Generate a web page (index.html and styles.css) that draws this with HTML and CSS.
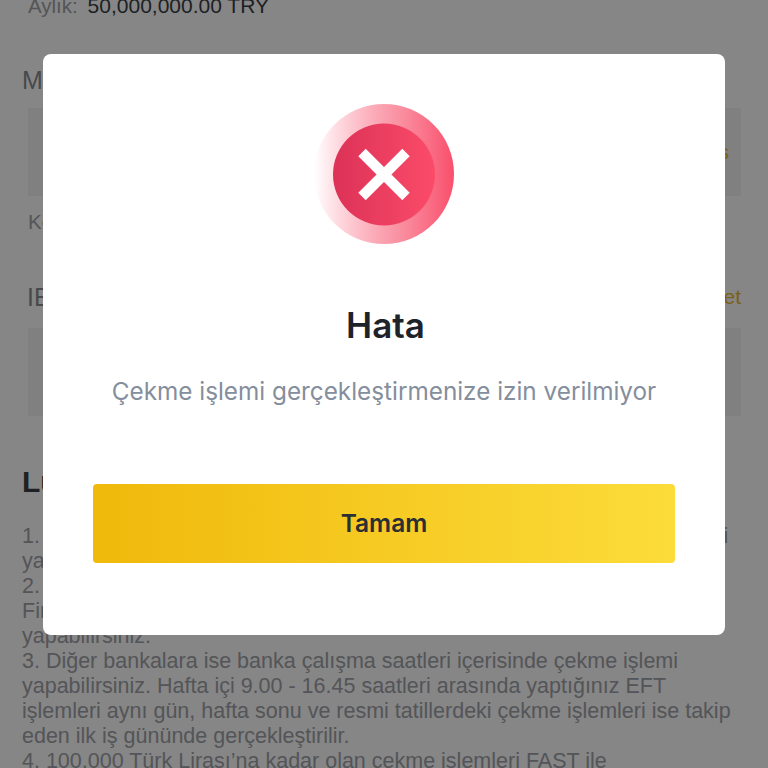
FILE: index.html

```html
<!DOCTYPE html>
<html lang="tr">

<head>
    <meta charset="utf-8">
    <meta name="viewport" content="width=device-width, initial-scale=1.0">
    <title>Çekme</title>
    <link rel="stylesheet" href="styles.css">
</head>

<body>
    <main class="sayfa">
        <p class="limit"><span class="limit_etiket">Aylık:</span> 50,000,000.00 TRY</p>

        <h2 class="baslik">Miktar</h2>
        <div class="kutu">
            <span class="kutu_link">Maks</span>
        </div>
        <p class="kullanilabilir">Kesinti</p>

        <div class="baslik_satir">
            <h2 class="baslik">IBAN</h2>
            <span class="kutu_link">Yönet</span>
        </div>
        <div class="kutu"></div>

        <h1 class="lutfen">Lütfen dikkat</h1>
        <p class="metin">
            1. Aşağıdaki bankaların hesaplarına, haftanın her günü, 7/24 çekme işlemi<br>
            yapabilirsiniz.<br>
            2. Anlaşmalı bankalara ise her gün çekme işlemi yapabilirsiniz.<br>
            Fin bankalar için de aynı saatler içinde çekme işlemi<br>
            yapabilirsiniz.<br>
            3. Diğer bankalara ise banka çalışma saatleri içerisinde çekme işlemi<br>
            yapabilirsiniz. Hafta içi 9.00 - 16.45 saatleri arasında yaptığınız EFT<br>
            işlemleri aynı gün, hafta sonu ve resmi tatillerdeki çekme işlemleri ise takip<br>
            eden ilk iş gününde gerçekleştirilir.<br>
            4. 100.000 Türk Lirası’na kadar olan çekme işlemleri FAST ile
        </p>
    </main>

    <section class="perde">
        <article class="popup">
            <svg class="popup_ikon" width="140" height="140" viewBox="0 0 140 140">
                <defs>
                    <linearGradient id="dis_halka">
                        <stop offset="0" stop-color="#fb5470" stop-opacity="0"></stop>
                        <stop offset="0.5" stop-color="#f86f85" stop-opacity="0.66"></stop>
                        <stop offset="1" stop-color="#f94f6c"></stop>
                    </linearGradient>
                    <linearGradient id="ic_daire">
                        <stop offset="0" stop-color="#dc3257"></stop>
                        <stop offset="1" stop-color="#fb4b69"></stop>
                    </linearGradient>
                </defs>
                <circle cx="70" cy="70" r="70" fill="url(#dis_halka)"></circle>
                <circle cx="70" cy="70.5" r="51" fill="url(#ic_daire)"></circle>
                <path d="M48 48.5 92 92.5M92 48.5 48 92.5" stroke="#fff" stroke-width="10.5" fill="none"></path>
            </svg>
            <h2 class="popup_titel">Hata</h2>
            <p class="popup_tekst">Çekme işlemi gerçekleştirmenize izin verilmiyor</p>
            <button class="popup_knap">Tamam</button>
        </article>
    </section>
</body>

</html>
```

FILE: styles.css

```css
body {
    margin: 0;
    height: 768px;
    overflow: hidden;
    background-color: #fff;
    font-family: "Liberation Sans", Arial, sans-serif;
}

.sayfa {
    padding: 0 27px 0 22px;
    margin-top: -7px;
}

.limit {
    margin: 0 0 0 6px;
    font-size: 21px;
    line-height: 26px;
    color: #3a3e46;
}

.limit_etiket {
    font-size: 20.5px;
    color: #a0a2a8;
    margin-right: 4px;
}

.baslik {
    margin: 0;
    font-size: 25px;
    line-height: 30px;
    font-weight: 400;
    color: #8a8c92;
}

.limit + .baslik {
    margin-top: 46px;
}

.kutu {
    display: flex;
    justify-content: flex-end;
    align-items: center;
    height: 88px;
    margin: 13px 0 0 6px;
    padding-right: 12px;
    background-color: #f3f3f3;
}

.kutu_link {
    font-size: 21px;
    color: #e8b82c;
}

.kullanilabilir {
    margin: 14px 0 0 6px;
    font-size: 20.5px;
    line-height: 24px;
    color: #a0a2a8;
}

.baslik_satir {
    display: flex;
    justify-content: space-between;
    align-items: center;
    margin-top: 48px;
    padding-left: 5px;
}

.baslik_satir + .kutu {
    margin-top: 16px;
}

.lutfen {
    margin: 48px 0 0;
    font-size: 30px;
    line-height: 36px;
    color: #3a3e46;
}

.metin {
    margin: 24px 0 0;
    font-size: 21.5px;
    line-height: 25px;
    white-space: nowrap;
    color: #a0a2a8;
}

/* karartma ve hata penceresi */
.perde {
    position: fixed;
    left: 0;
    top: 0;
    box-sizing: border-box;
    width: 100vw;
    height: 100vh;
    padding-bottom: 79px;
    display: flex;
    justify-content: center;
    align-items: center;
    background-color: rgba(0, 0, 0, .475);
}

.popup {
    box-sizing: border-box;
    display: flex;
    flex-direction: column;
    align-items: center;
    width: 682px;
    height: 581px;
    padding-top: 50px;
    background-color: #fff;
    border-radius: 8px;
    font-family: Inter, "Noto Sans", sans-serif;
}

.popup_titel {
    margin: 60px 0 0;
    padding-left: 3px;
    font-size: 35px;
    line-height: 42px;
    font-weight: 600;
    color: #1e2329;
}

.popup_tekst {
    margin: 30px 0 0;
    font-size: 24.3px;
    line-height: 30px;
    color: #848e9c;
}

.popup_knap {
    width: 582px;
    height: 79px;
    margin-top: 78px;
    padding-bottom: 3px;
    border: 0;
    border-radius: 4px;
    background: linear-gradient(90deg, #f0b90b, #fcdc3a);
    font-family: inherit;
    font-size: 24.5px;
    font-weight: 600;
    color: #2b2e33;
}
```
